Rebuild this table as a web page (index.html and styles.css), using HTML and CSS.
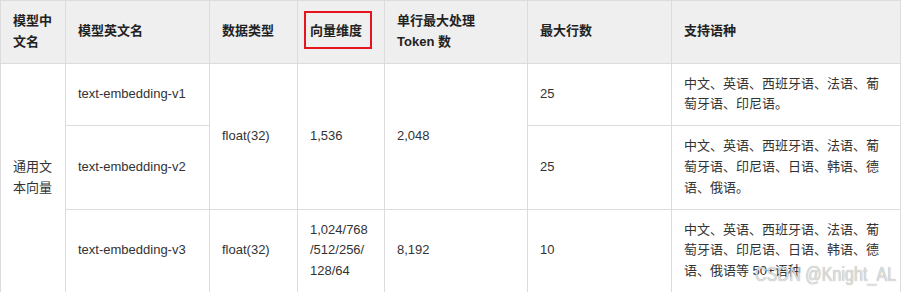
FILE: index.html
```html
<!DOCTYPE html>
<html lang="zh-CN">
<head>
<meta charset="utf-8">
<title>通用文本向量</title>
<link rel="stylesheet" href="styles.css">
</head>
<body>
<div class="page">
  <table class="spec">
    <colgroup>
      <col class="c1"><col class="c2"><col class="c3"><col class="c4"><col class="c5"><col class="c6"><col class="c7">
    </colgroup>
    <thead>
      <tr>
        <th>模型中文名</th>
        <th>模型英文名</th>
        <th>数据类型</th>
        <th><span class="mark">向量维度</span></th>
        <th>单行最大处理<br>Token 数</th>
        <th>最大行数</th>
        <th>支持语种</th>
      </tr>
    </thead>
    <tbody>
      <tr>
        <td rowspan="3">通用文本向量</td>
        <td>text-embedding-v1</td>
        <td rowspan="2">float(32)</td>
        <td rowspan="2">1,536</td>
        <td rowspan="2">2,048</td>
        <td>25</td>
        <td>中文、英语、西班牙语、法语、葡萄牙语、印尼语。</td>
      </tr>
      <tr>
        <td>text-embedding-v2</td>
        <td>25</td>
        <td>中文、英语、西班牙语、法语、葡萄牙语、印尼语、日语、韩语、德语、俄语。</td>
      </tr>
      <tr>
        <td>text-embedding-v3</td>
        <td>float(32)</td>
        <td>1,024/768<br>/512/256/<br>128/64</td>
        <td>8,192</td>
        <td>10</td>
        <td>中文、英语、西班牙语、法语、葡萄牙语、印尼语、日语、韩语、德语、俄语等 50+语种</td>
      </tr>
    </tbody>
  </table>
  <div class="watermark">CSDN @Knight_AL</div>
</div>
</body>
</html>
```
FILE: styles.css
```css
html, body {
  margin: 0;
  padding: 0;
  background: #fff;
}
.page {
  position: relative;
  width: 901px;
  height: 292px;
  overflow: hidden;
}
.spec {
  border-collapse: collapse;
  table-layout: fixed;
  width: 900px;
  font-family: "Liberation Sans", "Noto Sans CJK SC", sans-serif;
  font-size: 13px;
  line-height: 1.6;
  color: #333;
}
.c1 { width: 65px; }
.c2 { width: 144px; }
.c3 { width: 88px; }
.c4 { width: 87px; }
.c5 { width: 143px; }
.c6 { width: 144px; }
.c7 { width: 229px; }
.spec th,
.spec td {
  border: 1px solid #dcdcdc;
  padding: 10px 12px;
  text-align: left;
  vertical-align: middle;
}
.spec th {
  background: #efefef;
  font-weight: bold;
  color: #222;
}
.mark {
  position: relative;
}
.mark::after {
  content: "";
  position: absolute;
  left: -6px;
  right: -10px;
  top: -12px;
  bottom: -11px;
  border: 2px solid #e5141f;
}
.watermark {
  position: absolute;
  left: 755px;
  top: 261px;
  font-family: "Liberation Sans", sans-serif;
  font-size: 21px;
  line-height: 26px;
  color: rgba(240, 240, 240, 0.8);
  text-shadow: 0 0 1px rgba(100, 100, 100, 0.75);
  transform: scaleX(0.77);
  transform-origin: left top;
  white-space: nowrap;
}
```
